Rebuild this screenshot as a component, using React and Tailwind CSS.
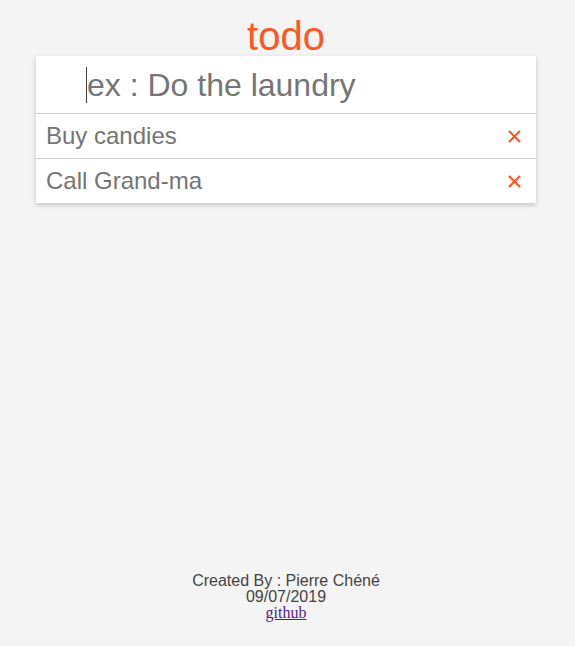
import React from 'react';

const todos = ['Buy candies', 'Call Grand-ma'];

const CloseIcon = () => (
  <svg width="13" height="13" viewBox="0 0 13 13" className="text-[#ff5722]">
    <path d="M1 1 L12 12 M12 1 L1 12" stroke="currentColor" strokeWidth="2.2" />
  </svg>
);

export default function App() {
  return (
    <div className="min-h-screen bg-[#f4f4f4] flex flex-col items-center pr-[3px] font-['Liberation_Sans',Arial,sans-serif]">
      <h1 className="pt-4 text-[40px] leading-[40px] text-[#ff5722]">todo</h1>
      <div className="w-[500px] bg-white shadow-[0_2px_5px_rgba(0,0,0,0.2)]">
        <div className="h-[58px] border-b border-[#cccccc] flex items-center pl-[50px]">
          <span className="w-px h-[36px] bg-[#444444] shrink-0" />
          <input
            className="w-full outline-none text-[32px] text-[#757575] placeholder:text-[#757575] bg-transparent caret-transparent"
            placeholder="ex : Do the laundry"
          />
        </div>
        {todos.map((todo, i) => (
          <div
            key={todo}
            className={`flex items-center justify-between pl-[10px] pr-[15px] ${i < todos.length - 1 ? 'h-[45px] border-b border-[#cccccc]' : 'h-[44px]'}`}
          >
            <span className="text-[24px] text-[#757575]">{todo}</span>
            <button className="flex">
              <CloseIcon />
            </button>
          </div>
        ))}
      </div>
      <footer className="mt-auto pb-[25px] text-center text-[16px] leading-[16px] text-[#444444]">
        <p>Created By : Pierre Chéné</p>
        <p>09/07/2019</p>
        <a href="#" className="font-['Liberation_Serif',serif] text-[16px] text-[#551a8b] underline">github</a>
      </footer>
    </div>
  );
}
